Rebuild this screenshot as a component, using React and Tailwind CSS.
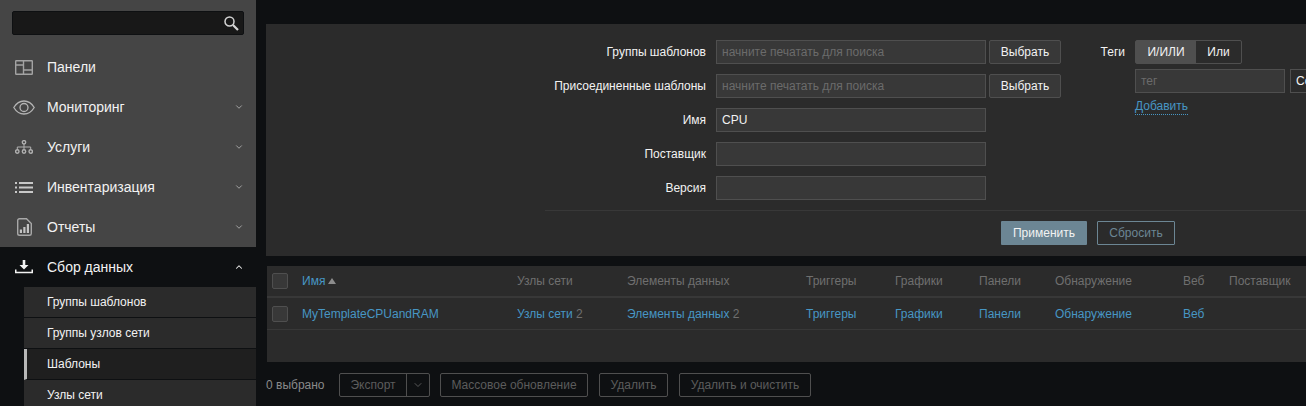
import React from 'react';
import { ChevronDown, ChevronUp } from 'lucide-react';

const menu = [
  { label: 'Панели', icon: <DashIcon />, arrow: false },
  { label: 'Мониторинг', icon: <EyeIcon />, arrow: true },
  { label: 'Услуги', icon: <TreeIcon />, arrow: true },
  { label: 'Инвентаризация', icon: <ListIcon />, arrow: true },
  { label: 'Отчеты', icon: <ReportIcon />, arrow: true },
];

const subMenu = ['Группы шаблонов', 'Группы узлов сети', 'Шаблоны', 'Узлы сети'];

const columns = ['Узлы сети', 'Элементы данных', 'Триггеры', 'Графики', 'Панели', 'Обнаружение', 'Веб', 'Поставщик'];

const rowCells = [
  { label: 'Узлы сети', count: 2 },
  { label: 'Элементы данных', count: 2 },
  { label: 'Триггеры' },
  { label: 'Графики' },
  { label: 'Панели' },
  { label: 'Обнаружение' },
  { label: 'Веб' },
  { label: '' },
];

const filterRows = [
  { label: 'Группы шаблонов', placeholder: 'начните печатать для поиска', select: true },
  { label: 'Присоединенные шаблоны', placeholder: 'начните печатать для поиска', select: true },
  { label: 'Имя', value: 'CPU' },
  { label: 'Поставщик' },
  { label: 'Версия' },
];

function SearchIcon() {
  return (
    <svg width="15" height="15" viewBox="0 0 15 15" fill="none" stroke="#d4d4d4">
      <circle cx="5.500" cy="5.500" r="4.500" strokeWidth="1.500" />
      <path d="M9 9L14 14" strokeWidth="2.200" />
    </svg>
  );
}

function DashIcon() {
  return (
    <svg width="18" height="15" viewBox="0 0 18 15" fill="none" stroke="#a3a3a3" strokeWidth="1.4">
      <rect x="0.7" y="0.7" width="16.6" height="13.6" rx="0.5" />
      <path d="M8.5 0.7V14.300M0.700 5H8.500M8.500 10H17.300" />
    </svg>
  );
}

function EyeIcon() {
  return (
    <svg width="22" height="15" viewBox="0 0 22 15" fill="none" stroke="#b4b4b4" strokeWidth="1.300">
      <path d="M0.800 7.500C3.500 3 7 1 11 1s7.500 2 10.200 6.500c-2.700 4.500-6.200 6.500-10.200 6.500S3.500 12 0.800 7.500z" />
      <circle cx="11" cy="7.500" r="4" />
    </svg>
  );
}

function TreeIcon() {
  return (
    <svg width="18" height="14" viewBox="0 0 18 14" fill="none" stroke="#b0b0b0" strokeWidth="1.400">
      <circle cx="9" cy="2.300" r="1.700" />
      <circle cx="2.300" cy="11.500" r="1.700" />
      <circle cx="9" cy="11.500" r="1.700" />
      <circle cx="15.700" cy="11.500" r="1.700" />
      <path d="M9 4V9.800M2.300 9.800V7H15.700V9.800" strokeWidth="1" />
    </svg>
  );
}

function ListIcon() {
  return (
    <svg width="18" height="11" viewBox="0 0 18 11" fill="#c8c8c8">
      <rect x="0" y="0" width="2" height="2" />
      <rect x="4" y="0" width="14" height="2" />
      <rect x="0" y="4.500" width="2" height="2" />
      <rect x="4" y="4.500" width="14" height="2" />
      <rect x="0" y="9" width="2" height="2" />
      <rect x="4" y="9" width="14" height="2" />
    </svg>
  );
}

function ReportIcon() {
  return (
    <svg width="15" height="18" viewBox="0 0 15 18" fill="none">
      <path d="M2.500 0.700H9.500L14.300 5.500V15.500A1.800 1.800 0 0 1 12.500 17.300H2.500A1.800 1.800 0 0 1 0.700 15.500V2.500A1.800 1.800 0 0 1 2.500 0.700z" stroke="#a8a8a8" strokeWidth="1.400" />
      <path d="M2.800 11.500H5V15H2.800zM6.300 9H8.500V15H6.300zM9.800 6H12V15H9.800z" fill="#c4c4c4" />
    </svg>
  );
}

function DownloadIcon() {
  return (
    <svg width="18" height="14" viewBox="0 0 18 14" fill="#f2f2f2">
      <path d="M7.700 0H10.300V5H13.500L9 9.500L4.500 5H7.700z" />
      <path d="M0 9.500H1.500V11.800H16.500V9.500H18V13.300H0z" />
    </svg>
  );
}

function Checkbox() {
  return <div className="w-4 h-4 rounded-[2px] border border-[#4f4f4f] bg-[#383838]" />;
}

function FilterField({ placeholder, value, w }) {
  return (
    <div className={`h-6 ${w} shrink-0 flex items-center px-[5px] bg-[#383838] border border-[#4f4f4f] text-[#f2f2f2]`}>
      {placeholder ? <span className="text-[#6b6b6b]">{placeholder}</span> : value}
    </div>
  );
}

function FooterButton({ children, w }) {
  return (
    <div className={`h-6 ${w} flex items-center justify-center rounded-[2px] border border-[#4f4f4f] text-[#5c5c5c]`}>
      {children}
    </div>
  );
}

export default function App() {
  return (
    <div className="w-[1306px] h-[406px] overflow-hidden flex bg-[#0e1012] text-xs text-[#f2f2f2] font-['Liberation_Sans',Arial,sans-serif]">
      <aside className="w-64 shrink-0 flex flex-col bg-[#0e1012]">
        <div className="h-[47px] shrink-0 pt-[11px] px-3 bg-[#454545]">
          <div className="h-6 flex items-center justify-end pr-1 rounded-[2px] bg-[#181818] border border-[#0e1012]">
            <SearchIcon />
          </div>
        </div>
        <div className="h-[200px] shrink-0 bg-[#454545]">
          {menu.map(item => (
            <div key={item.label} className="h-10 flex items-center text-sm text-[#f2f2f2]">
              <div className="ml-1 mr-[3px] w-10 shrink-0 flex items-center justify-center">{item.icon}</div>
              <span className="flex-1">{item.label}</span>
              {item.arrow && <ChevronDown size={10} strokeWidth={2} color="#b4b4b4" className="mr-3" />}
            </div>
          ))}
        </div>
        <div className="h-10 shrink-0 flex items-center text-sm">
          <div className="ml-1 mr-[3px] w-10 shrink-0 flex items-center justify-center"><DownloadIcon /></div>
          <span className="flex-1">Сбор данных</span>
          <ChevronUp size={10} strokeWidth={2.5} color="#f2f2f2" className="mr-3" />
        </div>
        <div className="ml-6 flex flex-col">
          {subMenu.map(item => (
            <div
              key={item}
              className={`h-[31px] shrink-0 flex items-center border-b border-[#0e1012] ${item === 'Шаблоны' ? 'bg-[#1f1f1f] border-l-[3px] border-l-[#b8b8b8] pl-5' : 'bg-[#2b2b2b] pl-[23px]'}`}
            >
              {item}
            </div>
          ))}
        </div>
      </aside>

      <main className="flex-1 min-w-0 pl-[10px] pt-6 overflow-hidden">
        <section className="h-[232px] bg-[#2b2b2b] overflow-hidden">
          <div className="flex pt-4 h-[186px]">
            <div className="w-[440px] shrink-0 flex flex-col gap-[10px]">
              {filterRows.map(r => (
                <div key={r.label} className="h-6 flex items-center justify-end text-[#f2f2f2]">{r.label}</div>
              ))}
            </div>
            <div className="ml-[10px] flex flex-col gap-[10px]">
              {filterRows.map(r => (
                <div key={r.label} className="flex gap-[3px]">
                  <FilterField placeholder={r.placeholder} value={r.value} w="w-[270px]" />
                  {r.select && (
                    <div className="h-6 w-[72px] flex items-center justify-center rounded-[2px] bg-[#383838] border border-[#4f4f4f]">Выбрать</div>
                  )}
                </div>
              ))}
            </div>
            <div className="w-[64px] shrink-0 h-6 flex items-center justify-end">Теги</div>
            <div className="ml-[10px] flex flex-col">
              <div className="flex h-6 w-[107px] rounded-[2px] border border-[#4f4f4f]">
                <div className="w-[60px] flex items-center justify-center bg-[#4f4f4f]">И/ИЛИ</div>
                <div className="flex-1 flex items-center justify-center">Или</div>
              </div>
              <div className="flex gap-[5px] mt-[5px]">
                <FilterField placeholder="тег" w="w-[150px]" />
                <div className="h-6 w-[90px] flex items-center px-[5px] bg-[#2b2b2b] border border-[#4f4f4f]">Содержит</div>
              </div>
              <div className="mt-[6px] self-start leading-[15px] text-[#4796c4] border-b border-dotted border-[#4796c4]">Добавить</div>
            </div>
          </div>
          <div className="ml-[279px] border-t border-[#383838] flex pt-[10px] pl-[456px] gap-[10px]">
            <div className="h-6 w-[86px] flex items-center justify-center rounded-[1px] bg-[#6c8694]">Применить</div>
            <div className="h-6 w-[78px] flex items-center justify-center rounded-[1px] border border-[#6c8694] text-[#6c8694]">Сбросить</div>
          </div>
        </section>

        <section className="mt-[10px] ml-px h-24 bg-[#2b2b2b]">
          <div className="h-8 flex items-center border-b-2 border-[#383838] text-[#6f6f6f]">
            <div className="w-[35px] pl-[5px] shrink-0"><Checkbox /></div>
            <div className="w-[215px] shrink-0 flex items-center gap-[3px] text-[#4796c4]">
              Имя
              <span className="w-0 h-0 border-x-4 border-x-transparent border-b-[6px] border-b-[#8c8c8c]" />
            </div>
            <div className="w-[110px] shrink-0">{columns[0]}</div>
            <div className="w-[179px] shrink-0">{columns[1]}</div>
            <div className="w-[89px] shrink-0">{columns[2]}</div>
            <div className="w-[84px] shrink-0">{columns[3]}</div>
            <div className="w-[76px] shrink-0">{columns[4]}</div>
            <div className="w-[128px] shrink-0">{columns[5]}</div>
            <div className="w-[46px] shrink-0">{columns[6]}</div>
            <div className="shrink-0">{columns[7]}</div>
          </div>
          <div className="h-8 flex items-center border-b border-[#383838]">
            <div className="w-[35px] pl-[5px] shrink-0"><Checkbox /></div>
            <div className="w-[215px] shrink-0 text-[#4796c4]">MyTemplateCPUandRAM</div>
            {rowCells.map((c, i) => (
              <div key={i} className={`shrink-0 ${['w-[110px]', 'w-[179px]', 'w-[89px]', 'w-[84px]', 'w-[76px]', 'w-[128px]', 'w-[46px]', ''][i]}`}>
                <span className="text-[#4796c4]">{c.label}</span>
                {c.count && <span className="text-[#6f6f6f]"> {c.count}</span>}
              </div>
            ))}
          </div>
        </section>

        <footer className="mt-[11px] flex items-center text-[#8a8a8a]">
          <span className="w-[73px] shrink-0">0 выбрано</span>
          <div className="flex h-6 w-[91px] rounded-[2px] border border-[#4f4f4f] text-[#5c5c5c]">
            <div className="w-[67px] flex items-center justify-center border-r border-[#4f4f4f]">Экспорт</div>
            <div className="flex-1 flex items-center justify-center"><ChevronDown size={12} strokeWidth={1.5} color="#6f6f6f" /></div>
          </div>
          <div className="flex gap-[11px] ml-[10px]">
            <FooterButton w="w-[148px]">Массовое обновление</FooterButton>
            <FooterButton w="w-[69px]">Удалить</FooterButton>
            <FooterButton w="w-[132px]">Удалить и очистить</FooterButton>
          </div>
        </footer>
      </main>
    </div>
  );
}
